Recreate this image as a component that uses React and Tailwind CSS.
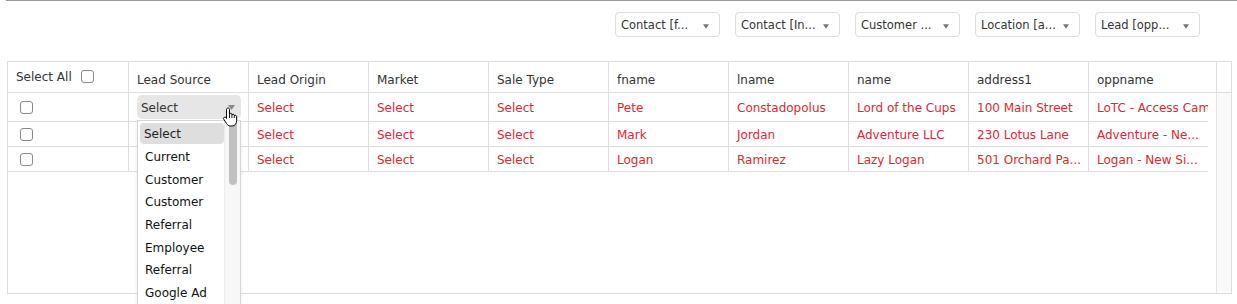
import React from "react";

const filters = ["Contact [f...", "Contact [In...", "Customer ...", "Location [a...", "Lead [opp..."];
const cols = ["Lead Source", "Lead Origin", "Market", "Sale Type", "fname", "lname", "name", "address1", "oppname"];
const rows = [
  { h: "h-[29px]", cells: ["Pete", "Constadopolus", "Lord of the Cups", "100 Main Street", "LoTC - Access Cam"] },
  { h: "h-[25px]", cells: ["Mark", "Jordan", "Adventure LLC", "230 Lotus Lane", "Adventure - Ne..."] },
  { h: "h-[25px]", cells: ["Logan", "Ramirez", "Lazy Logan", "501 Orchard Pa...", "Logan - New Si..."] },
];
const options = ["Current", "Customer", "Customer", "Referral", "Employee", "Referral", "Google Ad"];

function Box() {
  return <div className="w-[13px] h-[13px] rounded-[3px] border-[1.5px] border-[#8a8a8a] bg-white" />;
}

function Tri({ cls }) {
  return (
    <svg width="7" height="5" viewBox="0 0 7 5" className={cls}>
      <path d="M0 0 H7 L3.5 5 Z" fill="currentColor" />
    </svg>
  );
}

function Hand() {
  return (
    <svg width="17" height="20" viewBox="0 0 17 20" className="absolute left-[222px] top-[107px]">
      <path
        d="M6 1 C6.8 1 7.5 1.6 7.5 2.5 V7.5 C7.5 6.8 8 6.3 8.7 6.3 C9.4 6.3 9.9 6.8 9.9 7.5 V8.3 C9.9 7.6 10.4 7.2 11.1 7.2 C11.8 7.2 12.3 7.7 12.3 8.4 V9.2 C12.3 8.6 12.8 8.3 13.4 8.3 C14 8.3 14.6 8.8 14.6 9.5 V13.5 C14.6 16.5 13 19 10 19 H8.5 C6.5 19 5.5 18 4.5 16.5 L1.8 12.3 C1.3 11.6 1.5 10.8 2.1 10.4 C2.7 10 3.5 10.2 4 10.8 L4.5 11.5 V2.5 C4.5 1.6 5.2 1 6 1 Z"
        fill="white"
        stroke="black"
        strokeWidth="1"
        strokeLinejoin="round"
      />
      <path d="M7.5 7.5 V11 M9.9 8.3 V11 M12.3 9.2 V11" stroke="black" strokeWidth="0.9" />
    </svg>
  );
}

export default function App() {
  return (
    <div className="relative w-[1237px] h-[304px] overflow-hidden bg-white text-[#333]" style={{ fontFamily: '"DejaVu Sans", Verdana, sans-serif' }}>
      <div className="ml-[6px] h-px bg-[#999]" />
      <div className="flex justify-end gap-[15px] pr-[37px] pt-[11px]">
        {filters.map((f, i) => (
          <div key={i} className="w-[105px] h-[25px] rounded-[4px] border border-[#ddd] flex items-center justify-between pl-[5px] pr-[10px] pt-[3px] text-[11.5px] text-[#333]">
            <span className="whitespace-nowrap">{f}</span>
            <Tri cls="text-[#777] w-[6px] h-[5px]" />
          </div>
        ))}
      </div>

      <div className="ml-[7px] mt-[24px] w-[1225px] h-[233px] border border-[#ddd] flex flex-col overflow-hidden text-[12px]">
        <div className="flex h-[31px] shrink-0 border-b border-[#ddd]">
          <div className="w-[121px] shrink-0 border-r border-[#ddd] flex items-center pl-[8px] gap-[9px] pb-[1px]">
            <span>Select All</span>
            <Box />
          </div>
          {cols.map((c, i) => (
            <div key={i} className={`${i === 8 ? "w-[128px]" : "w-[120px]"} shrink-0 border-r border-[#ddd] pl-[8px] pt-[9px] whitespace-nowrap`}>
              {c}
            </div>
          ))}
          <div className="w-[14px] shrink-0" />
        </div>

        <div className="flex flex-1 min-h-0">
          <div className="w-[1200px] shrink-0">
            {rows.map((r, ri) => (
              <div key={ri} className={`flex ${r.h} border-b border-[#ddd]`}>
                <div className="w-[121px] shrink-0 border-r border-[#ddd] flex items-center pl-[12px]">
                  <Box />
                </div>
                <div className="w-[120px] shrink-0 border-r border-[#ddd] flex items-center pl-[8px]">
                  {ri === 0 ? (
                    <div className="w-[104px] h-[24px] rounded-[5px] bg-[#e6e6e6] flex items-center justify-between pl-[4px] pr-[6px] text-[#333]">
                      <span className="pt-[2px]">Select</span>
                      <Tri cls="text-[#888]" />
                    </div>
                  ) : null}
                </div>
                {["Select", "Select", "Select", ...r.cells].map((t, ci) => (
                  <div key={ci} className={`${ci === 7 ? "w-[119px]" : "w-[120px] border-r border-[#ddd]"} shrink-0 flex items-center pl-[8px] pt-[2px] overflow-hidden whitespace-nowrap text-[#e0282f]`}>
                    {t}
                  </div>
                ))}
              </div>
            ))}
          </div>
          <div className="w-[8px] shrink-0" />
          <div className="w-[15px] shrink-0 border-l border-[#e3e3e3] bg-[#fafafa]" />
        </div>
      </div>

      <div className="absolute left-[137px] top-[120px] w-[104px] h-[200px] border border-[#d5d5d5] bg-white flex shadow-[0_2px_4px_rgba(0,0,0,0.08)]">
        <div className="flex-1 pl-[2px] pt-[1px] text-[12px] text-[#111]">
          <div className="w-[84px] h-[21px] mt-[1px] rounded-[4px] bg-[#dedede] flex items-center pl-[4px] pt-[1px] text-[#222]">Select</div>
          <div className="pt-[2px]">
            {options.map((o, i) => (
              <div key={i} className="h-[22.6px] flex items-center pl-[5px] whitespace-nowrap">{o}</div>
            ))}
          </div>
        </div>
        <div className="w-[16px] shrink-0 border-l border-[#ececec] bg-[#f7f7f7] flex justify-center">
          <div className="w-[8px] h-[64px] rounded-full bg-[#c1c1c1]" />
        </div>
      </div>

      <Hand />
    </div>
  );
}
